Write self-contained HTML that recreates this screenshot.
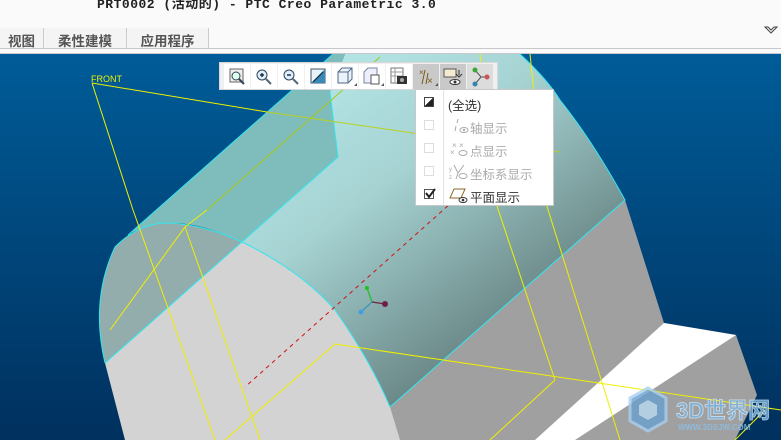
<!DOCTYPE html>
<html><head><meta charset="utf-8"><style>
*{margin:0;padding:0;box-sizing:border-box}
body{width:781px;height:440px;overflow:hidden;background:#fafafa;font-family:"Liberation Sans","Noto Sans CJK SC",sans-serif;position:relative}
.title{position:absolute;left:97px;top:-7px;font-family:"Liberation Mono","Noto Sans CJK SC",monospace;font-size:13px;font-weight:bold;color:#222;letter-spacing:0.5px}
.tabs{position:absolute;left:0;top:28px;height:21px;display:flex;font-size:13.5px;font-weight:bold;color:#555}
.tabs div{border-right:1px solid #ccc;padding:2px 0 0 0;text-align:center;background:#f4f4f4}
.line1{position:absolute;left:0;top:48px;width:781px;height:1px;background:#c8c8cc}
.line2{position:absolute;left:0;top:53px;width:781px;height:1px;background:#c8c8cc}
svg.vp{position:absolute;left:0;top:54px}
.tb{position:absolute;left:219px;top:62px;width:279px;height:28px;background:#f0f0f0;border:1px solid #d8d8d8;display:flex;padding:1px 0 0 4px}
.tb div{width:26px;height:25px;margin-right:1px;background:#fff;position:relative}
.tb div.p{background:#c9c9c9}
.menu{position:absolute;left:415px;top:89px;width:139px;height:117px;background:#fff;border:1px solid #c8c8c8;font-size:12.5px}
.menu .sep{position:absolute;left:27px;top:0;width:1px;height:115px;background:#e2e2e2}
.mi{position:absolute;left:0;height:20px;width:137px}
.cb{position:absolute;left:8px;top:4px;width:10px;height:10px;border:1px solid #ddd}
.lab{position:absolute;left:54px;top:2px;color:#aaa}
</style></head><body>
<div class="title">PRT0002 (活动的) - PTC Creo Parametric 3.0</div>
<div class="tabs"><div style="width:44px">视图</div><div style="width:83px">柔性建模</div><div style="width:82px">应用程序</div></div>
<svg style="position:absolute;left:764px;top:25px" width="14" height="10"><path d="M1 2 L7 8 L13 2 L10 2 L7 5 L4 2 Z" fill="none" stroke="#444" stroke-width="1"/></svg>
<div class="line1"></div><div class="line2"></div>
<svg class="vp" width="781" height="386" viewBox="0 54 781 386">
<defs>
<linearGradient id="bg" x1="0" y1="0" x2="0" y2="1"><stop offset="0" stop-color="#005c98"/><stop offset="1" stop-color="#00305e"/></linearGradient>
<linearGradient id="cy" x1="0.25" y1="0.2" x2="0.85" y2="0.75"><stop offset="0" stop-color="#b4e6e6"/><stop offset="0.4" stop-color="#a6d2d2"/><stop offset="1" stop-color="#64807f"/></linearGradient>
</defs>
<rect x="0" y="54" width="781" height="386" fill="url(#bg)"/>
<polygon points="625,200 664,323 736,335 757,395 735,440 390,440 390,407" fill="#a0a0a0"/>
<polygon points="664,323 736,335 575,440 535,440" fill="#ffffff"/>
<path d="M338,157 L330,92 L345,54 L520,54 Q548,80 560,100 Q592,140 625,200 L390,407 L105,363 Z" fill="url(#cy)"/>
<path d="M333,54 L345,54 L330,92 L338,157 L242,242 Q200,222 170,223 Q140,226 128,235 Z" fill="#7fbcbc"/>
<path d="M105,363 Q90,300 115,247 Q140,222 170,223 Q205,225 242,242 Q300,270 335,310 Q370,360 390,407 L400,440 L125,440 Z" fill="#d3d3d3"/>
<path d="M105,363 Q90,300 115,247 Q140,222 170,223 Q205,225 242,242 Z" fill="#93acac"/>
<g fill="none" stroke="#33e6f0" stroke-width="1">
<path d="M333,54 L128,235"/><path d="M330,92 L338,157 L105,363"/>
<path d="M105,363 Q90,300 115,247 Q140,222 170,223 Q205,225 242,242 Q300,270 335,310 Q370,360 390,407"/>
<path d="M520,54 Q548,80 560,100 Q592,140 625,200 L390,407"/>
</g>
<g fill="none" stroke="#f0f000" stroke-width="1">
<path d="M92,83 L267,112"/><path d="M267,112 L413,133 L560,152" stroke="#b8d020"/>
<path d="M92,83 L133,210 L215,440"/>
<path d="M380,57 L207,210" stroke="#a8c818"/><path d="M207,210 L185,227 L110,330"/>
<path d="M185,227 L260,440"/>
<path d="M335,344 L781,410"/><path d="M335,344 L225,440"/>
<path d="M555,380 L490,440"/>
<path d="M480,54 L495,200 L555,380"/><path d="M530,54 L545,200 L620,440"/>
<path d="M765,410 L735,440"/>
</g>
<text x="91" y="82" fill="#f0f000" font-size="9" font-family="Liberation Sans">FRONT</text>
<path d="M460,195 L245,387" stroke="#d01010" stroke-width="1" stroke-dasharray="4,4"/>
<g stroke-width="1.2" fill="none"><path d="M372,302 L367,288" stroke="#20c020"/><path d="M372,302 L385,304" stroke="#702040"/><path d="M372,302 L361,312" stroke="#4090c0"/></g>
<circle cx="367" cy="288" r="2" fill="#20c020"/><circle cx="385" cy="304" r="3" fill="#702040"/><circle cx="361" cy="312" r="2.5" fill="#40a0e0"/>
<g opacity="0.8">
<path d="M648,388 L666,398 L666,421 L648,431 L630,421 L630,398 Z" fill="#6aa0d0" stroke="#a8d0f0" stroke-width="3"/>
<path d="M648,400 L657,405 L657,415 L648,420 L639,415 L639,405 Z" fill="#b8daf0"/>
<text x="676" y="418" fill="#7ab4e0" font-size="22" font-family="Liberation Sans,Noto Sans CJK SC,sans-serif" font-weight="bold" stroke="#d8ecfa" stroke-width="0.8">3D世界网</text>
<text x="678" y="430" fill="#8ac0e8" font-size="8" font-family="Liberation Sans" font-weight="bold">WWW.3DSJW.COM</text>
</g>
</svg>
<div class="tb">
<div><svg width="26" height="25"><rect x="6" y="5" width="13" height="13" fill="#eee" stroke="#666"/><circle cx="12" cy="12" r="4" fill="#dfe" stroke="#345"/><path d="M15 15 L20 20" stroke="#345" stroke-width="2"/></svg></div>
<div><svg width="26" height="25"><circle cx="11" cy="11" r="5" fill="#def" stroke="#345"/><path d="M9 11h4M11 9v4" stroke="#234" stroke-width="1.5"/><path d="M15 15 L20 20" stroke="#567" stroke-width="2"/></svg></div>
<div><svg width="26" height="25"><circle cx="11" cy="11" r="5" fill="#def" stroke="#345"/><path d="M9 11h4" stroke="#234" stroke-width="1.5"/><path d="M15 15 L20 20" stroke="#567" stroke-width="2"/></svg></div>
<div><svg width="26" height="25"><rect x="6" y="5" width="14" height="14" fill="#e8f4fa" stroke="#456"/><path d="M6 19 L20 5 L20 19Z" fill="#3a8ab8"/><path d="M8 18 L18 8" stroke="#123"/></svg></div>
<div><svg width="26" height="25"><path d="M6 8 L10 4 L20 4 L20 15 L16 19 L6 19Z" fill="#e8f4fa" stroke="#568"/><path d="M6 8 L16 8 L16 19 M16 8 L20 4" stroke="#568" fill="none"/><path d="M22 22 L25 22 L25 19Z" fill="#555"/></svg></div>
<div><svg width="26" height="25"><path d="M5 8 L9 4 L18 4 L18 15 L14 19 L5 19Z" fill="#eef" stroke="#789"/><rect x="12" y="11" width="8" height="9" fill="#fff" stroke="#555"/><path d="M22 22 L25 22 L25 19Z" fill="#555"/></svg></div>
<div><svg width="26" height="25"><rect x="5" y="4" width="12" height="15" fill="#fff" stroke="#777"/><path d="M5 8h12M5 12h12M9 4v15" stroke="#999"/><rect x="11" y="12" width="10" height="8" fill="#333"/><circle cx="16" cy="16" r="2" fill="#aaa"/></svg></div>
<div class="p"><svg width="26" height="25"><text x="6" y="11" font-size="8" fill="#7a5a1a">×</text><path d="M12 6 L9 20 M15 9 L13 20" stroke="#7a5a1a"/><text x="14" y="20" font-size="10" fill="#7a5a1a">×</text><path d="M22 22 L25 22 L25 19Z" fill="#555"/></svg></div>
<div class="p"><svg width="26" height="25"><rect x="4" y="5" width="12" height="8" fill="#f4ecd0" stroke="#555"/><path d="M19 6 L19 11 M16 10 L19 13 L22 10" stroke="#333" fill="none"/><ellipse cx="15" cy="18" rx="5" ry="2.5" fill="#fff" stroke="#333"/><circle cx="15" cy="18" r="1.5" fill="#333"/></svg></div>
<div class="p" style="background:#dcdcdc"><svg width="26" height="25"><path d="M8 6 L14 13 L20 13 M14 13 L8 20" stroke="#555" fill="none"/><circle cx="8" cy="6" r="2.5" fill="#3a3"/><circle cx="20" cy="13" r="2.5" fill="#c55"/><circle cx="8" cy="20" r="2.5" fill="#38a"/></svg></div>
</div>
<div class="menu"><div class="sep"></div>
<div class="mi" style="top:3px"><div class="cb" style="border-color:#444;background:linear-gradient(135deg,#fff 50%,#222 50%)"></div><span class="lab" style="left:32px;color:#333">(全选)</span></div>
<div class="mi" style="top:26px"><div class="cb"></div><svg style="position:absolute;left:36px;top:2px" width="18" height="16"><path d="M6 1 L5 5 M4 8 L3 13" stroke="#aaa"/><ellipse cx="12" cy="12" rx="4" ry="2.5" fill="none" stroke="#aaa"/><circle cx="12" cy="12" r="1.2" fill="#aaa"/></svg><span class="lab">轴显示</span></div>
<div class="mi" style="top:49px"><div class="cb"></div><svg style="position:absolute;left:34px;top:1px" width="20" height="18"><text x="2" y="8" font-size="8" fill="#aaa">×</text><text x="9" y="8" font-size="8" fill="#aaa">×</text><text x="0" y="15" font-size="8" fill="#aaa">×</text><ellipse cx="13" cy="13" rx="4" ry="2.5" fill="none" stroke="#aaa"/></svg><span class="lab">点显示</span></div>
<div class="mi" style="top:72px"><div class="cb"></div><svg style="position:absolute;left:32px;top:1px" width="22" height="18"><path d="M6 2 L10 10 L16 2 M10 10 L8 16" stroke="#aaa" fill="none"/><text x="1" y="8" font-size="6" fill="#aaa">y</text><text x="1" y="16" font-size="6" fill="#aaa">z</text><ellipse cx="15" cy="13" rx="4" ry="2.5" fill="none" stroke="#aaa"/></svg><span class="lab">坐标系显示</span></div>
<div class="mi" style="top:95px"><div class="cb" style="border-color:#555"></div><svg style="position:absolute;left:8px;top:3px" width="12" height="12"><path d="M2 5 L5 9 L11 1" stroke="#222" stroke-width="2" fill="none"/></svg><svg style="position:absolute;left:32px;top:1px" width="22" height="18"><path d="M6 3 L17 3 L13 12 L2 12 Z" fill="none" stroke="#8a6a2a"/><ellipse cx="15" cy="14" rx="4" ry="2.5" fill="#fff" stroke="#333"/><circle cx="15" cy="14" r="1.3" fill="#333"/></svg><span class="lab" style="color:#333">平面显示</span></div>
</div>
</body></html>
